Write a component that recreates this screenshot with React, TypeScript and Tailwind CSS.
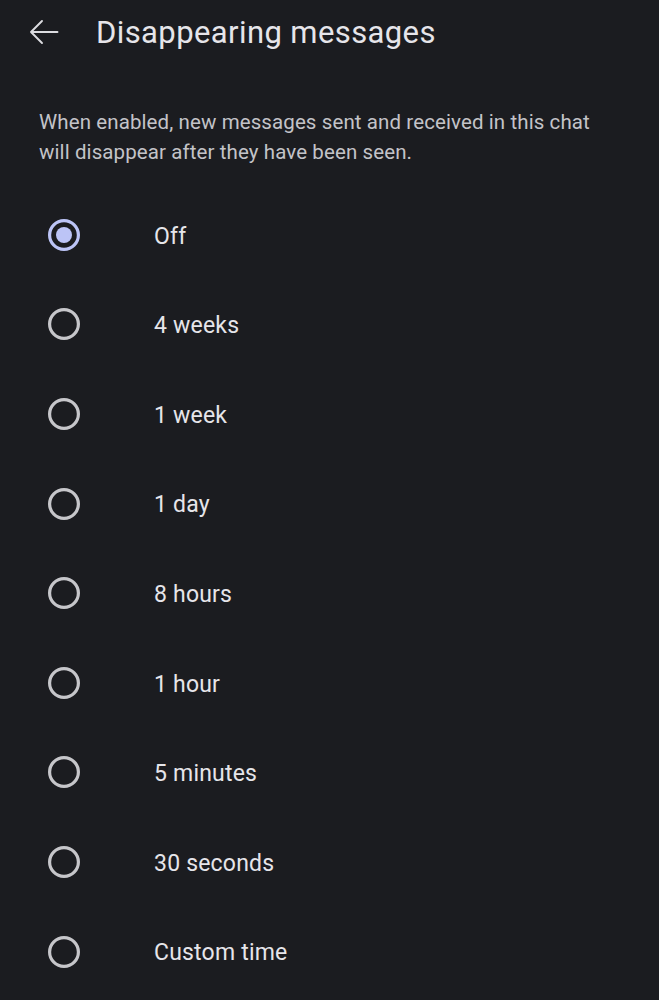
import { useState } from "react";

const options = [
  "Off",
  "4 weeks",
  "1 week",
  "1 day",
  "8 hours",
  "1 hour",
  "5 minutes",
  "30 seconds",
  "Custom time",
];

function Radio({ checked }: { checked: boolean }) {
  return (
    <svg width="34" height="34" viewBox="0 0 34 34">
      <circle
        cx="17"
        cy="17"
        r="14.4"
        fill="none"
        stroke={checked ? "#bcc4f6" : "#c6c6ca"}
        strokeWidth="3.2"
      />
      {checked && <circle cx="17" cy="17" r="8" fill="#bcc4f6" />}
    </svg>
  );
}

export default function App() {
  const [selected, setSelected] = useState("Off");

  return (
    <div className="min-h-[1000px] w-[659px] bg-[#1b1c20] font-['Roboto',sans-serif] text-[#e4e3e8]">
      {/* 顶部栏 */}
      <div className="flex h-[64px] items-center">
        <button type="button" className="ml-[29px] flex h-[30px] w-[30px] items-center justify-center">
          <svg width="30" height="30" viewBox="0 0 30 30" fill="none" stroke="#dcdce0" strokeWidth="1.9" strokeLinecap="round" strokeLinejoin="round">
            <path d="M28.5 15H2M13 4L2 15l11 11" />
          </svg>
        </button>
        <h1 className="ml-[37px] text-[31px] font-normal leading-none tracking-[0.4px] text-[#e6e5ea]">
          Disappearing messages
        </h1>
      </div>

      <p className="mx-[39px] mt-[43px] text-[20.5px] leading-[30px] tracking-[0.1px] text-[#c3c3c8]">
        When enabled, new messages sent and received in this chat will disappear after they have been seen.
      </p>

      {/* 选项列表 */}
      <div className="mt-[23px]">
        {options.map((opt) => (
          <button
            key={opt}
            type="button"
            onClick={() => setSelected(opt)}
            className="flex h-[89.6px] w-full items-center text-left"
          >
            <span className="ml-[47px] flex h-[34px] w-[34px] items-center justify-center">
              <Radio checked={selected === opt} />
            </span>
            <span className="ml-[73px] mt-[4px] text-[23px] tracking-[0.2px] text-[#e6e5ea]">{opt}</span>
          </button>
        ))}
      </div>
    </div>
  );
}
